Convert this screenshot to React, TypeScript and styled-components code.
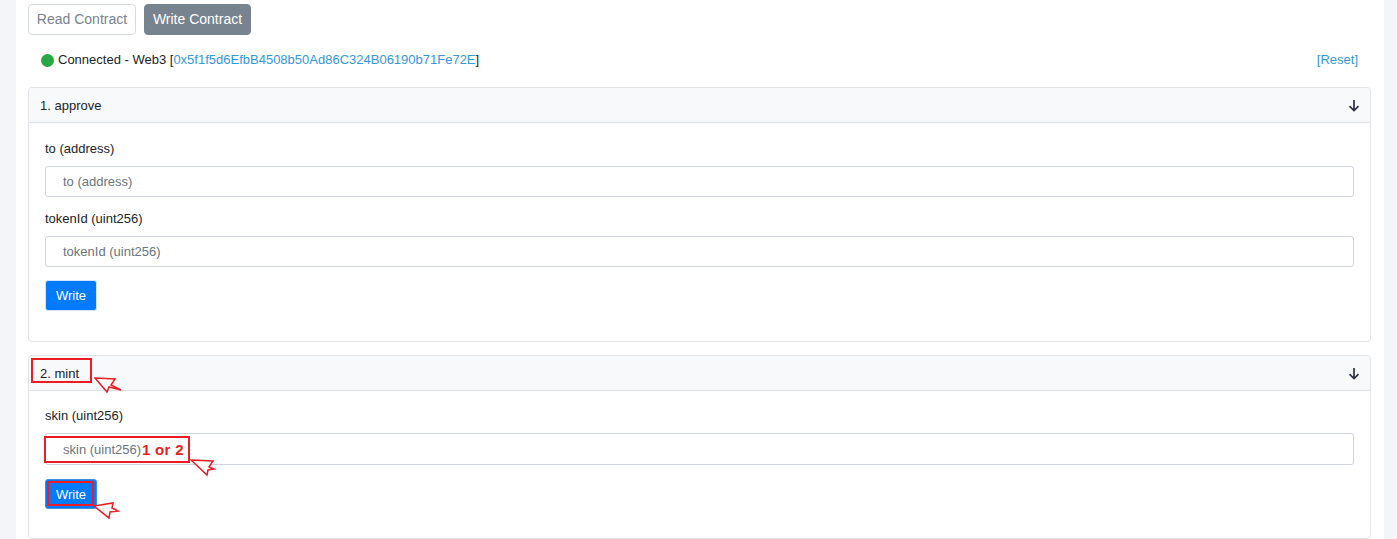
import React from "react";
import styled, { createGlobalStyle } from "styled-components";

const Global = createGlobalStyle`
  html, body { margin: 0; padding: 0; height: 539px; overflow: hidden; background: #f4f5f9; }
  * { box-sizing: border-box; }
  body { font-family: "Liberation Sans", Arial, sans-serif; font-size: 13px; color: #212529; }
`;
const Page = styled.div`
  margin: 0 13px 0 16px;
  height: 539px;
  background: #fff;
  padding: 4px 13px 0 12px;
  position: relative;
  overflow: hidden;
  display: flex;
  flex-direction: column;
`;
const Tabs = styled.div`display: flex; gap: 8px;`;
const Tab = styled.button<{ $active?: boolean }>`
  height: 31px;
  width: ${(p) => (p.$active ? 107 : 108)}px;
  padding: 0 0 2px;
  border-radius: 4px;
  font: 14px "Liberation Sans", Arial, sans-serif;
  border: 1px solid ${(p) => (p.$active ? "#77838f" : "#d5dae2")};
  background: ${(p) => (p.$active ? "#77838f" : "#fff")};
  color: ${(p) => (p.$active ? "#fff" : "#77838f")};
`;
const Status = styled.div`
  display: flex;
  justify-content: space-between;
  align-items: center;
  height: 20px;
  margin-top: 15px;
  padding: 0 13px 0 13px;
  line-height: 20px;
`;
const Left = styled.div`display: flex; align-items: center; white-space: pre;`;
const Dot = styled.span`
  width: 13px; height: 13px; border-radius: 50%; background: #28a745; margin-right: 4px;
`;
const Link = styled.a`color: #3498db; text-decoration: none;`;
const Cards = styled.div`
  display: flex;
  flex-direction: column;
  gap: 13px;
  margin-top: 17px;
`;
const Card = styled.section<{ $h: number }>`
  height: ${(p) => p.$h}px;
  flex: none;
  border: 1px solid #e1e3e6;
  border-radius: 4px;
  overflow: hidden;
`;
const CardHead = styled.header`
  height: 35px;
  background: #f8f9fa;
  border-bottom: 1px solid #dfe1e4;
  display: flex;
  align-items: center;
  justify-content: space-between;
  padding: 0 10px 0 11px;
`;
const CardBody = styled.div<{ $top: number }>`
  padding: ${(p) => p.$top}px 16px 0;
  display: flex;
  flex-direction: column;
  gap: 12px;
`;
const Field = styled.div`display: flex; flex-direction: column; gap: 7px;`;
const Label = styled.label`height: 20px; line-height: 20px;`;
const Input = styled.div<{ $h?: number }>`
  height: ${(p) => p.$h ?? 31}px;
  border: 1px solid #ced4da;
  border-radius: 3px;
  padding-left: 17px;
  display: flex;
  align-items: center;
  color: #6c757d;
`;
const WriteBtn = styled.button<{ $h?: number; $ring?: boolean }>`
  width: 52px;
  height: ${(p) => p.$h ?? 31}px;
  margin-top: ${(p) => (p.$ring ? 2 : 1)}px;
  padding: 0;
  border: 1px solid ${(p) => (p.$ring ? "#3d8fe0" : "#cfe4fb")};
  border-radius: 3px;
  background: #007bff;
  color: #fff;
  font: 13px "Liberation Sans", Arial, sans-serif;
`;
const Box = styled.div<{ $x: number; $y: number; $w: number; $h: number }>`
  position: absolute;
  left: ${(p) => p.$x - 16}px;
  top: ${(p) => p.$y}px;
  width: ${(p) => p.$w}px;
  height: ${(p) => p.$h}px;
  border: 2px solid #ed1c24;
`;
const Note = styled.span`
  position: absolute;
  left: 126px;
  top: 441px;
  color: #ed1c24;
  font: bold 15px/18px "Liberation Sans", Arial, sans-serif;
  letter-spacing: 0.3px;
  white-space: pre;
`;
const ArrowSvg = styled.svg<{ $x: number; $y: number }>`
  position: absolute;
  left: ${(p) => p.$x - 16}px;
  top: ${(p) => p.$y}px;
`;
const Arrow = ({ x, y, d }: { x: number; y: number; d: string }) => (
  <ArrowSvg $x={x} $y={y} width="30" height="20" viewBox="0 0 30 20" fill="none">
    <path d={d} stroke="#ed1c24" strokeWidth="1.5" fill="#fff" strokeLinejoin="miter" />
  </ArrowSvg>
);
const Down = () => (
  <svg width="12" height="13" viewBox="0 0 12 13" fill="none" stroke="#2c3344" strokeWidth="1.7">
    <path d="M6 1 V11.5 M1.5 7.2 L6 11.5 L10.5 7.2" />
  </svg>
);

export default function App() {
  return (
    <Page>
      <Global />
      <Tabs>
        <Tab>Read Contract</Tab>
        <Tab $active>Write Contract</Tab>
      </Tabs>
      <Status>
        <Left>
          <Dot />
          Connected - Web3 [<Link>0x5f1f5d6EfbB4508b50Ad86C324B06190b71Fe72E</Link>]
        </Left>
        <Link>[Reset]</Link>
      </Status>
      <Cards>
        <Card $h={255}>
          <CardHead>1. approve<Down /></CardHead>
          <CardBody $top={16}>
            <Field>
              <Label>to (address)</Label>
              <Input>to (address)</Input>
            </Field>
            <Field>
              <Label>tokenId (uint256)</Label>
              <Input>tokenId (uint256)</Input>
            </Field>
            <WriteBtn>Write</WriteBtn>
          </CardBody>
        </Card>
        <Card $h={184}>
          <CardHead>2. mint<Down /></CardHead>
          <CardBody $top={15}>
            <Field>
              <Label>skin (uint256)</Label>
              <Input $h={32}>skin (uint256)</Input>
            </Field>
            <WriteBtn $h={30} $ring>Write</WriteBtn>
          </CardBody>
        </Card>
      </Cards>
      <Box $x={31} $y={358} $w={61} $h={25} />
      <Box $x={44} $y={436} $w={146} $h={27} />
      <Box $x={47} $y={481} $w={47} $h={25} />
      <Note>1 or 2</Note>
      <Arrow x={94} y={377} d="M1 1 L21 2 L17 8 L27 13 L15 10 L13 15 Z" />
      <Arrow x={190} y={459} d="M1 1 L23 2 L19 8 L24 10 L18 11 L17 16 Z" />
      <Arrow x={93} y={502} d="M1 4 L20 1 L19 6 L25 9 L17 10 L16 16 Z" />
    </Page>
  );
}
